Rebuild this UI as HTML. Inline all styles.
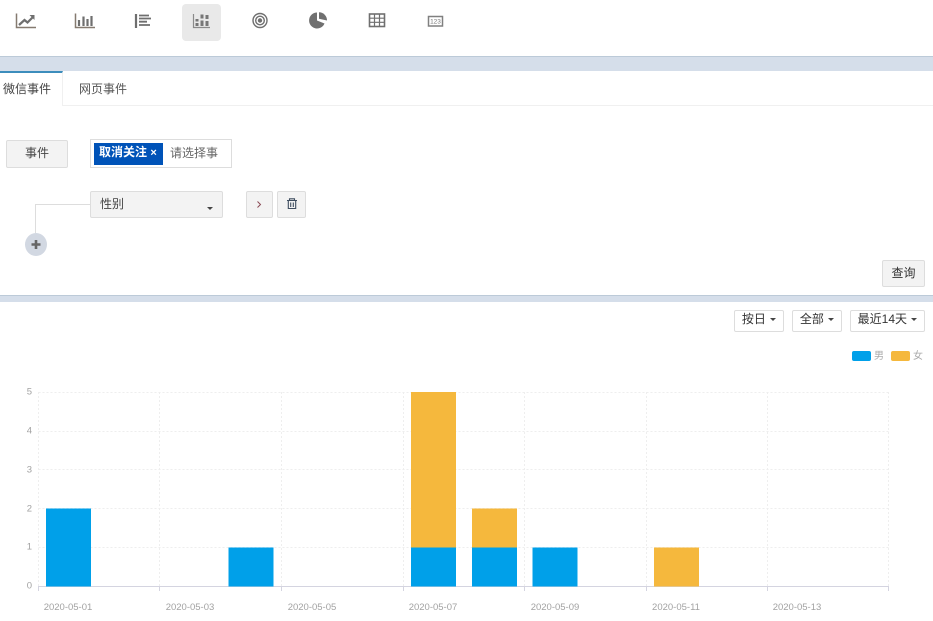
<!DOCTYPE html>
<html><head><meta charset="utf-8">
<style>
html,body{margin:0;padding:0;background:#fff}
body{width:933px;height:621px;position:relative;overflow:hidden;font-family:"Liberation Sans","Noto Sans CJK SC",sans-serif;font-size:12px;color:#333}
.a{position:absolute;box-sizing:border-box}
.band{left:0;width:933px;background:#d5deea;border-top:1px solid #bccad8}
.btn{background:#f3f3f3;border:1px solid #ddd;border-radius:2px;text-align:center;color:#444}
.drop{background:#fff;border:1px solid #ddd;border-radius:2px;text-align:center;color:#333;font-size:12px;height:22px;line-height:16px;top:310px}
.car{display:inline-block;width:0;height:0;border-left:3px solid transparent;border-right:3px solid transparent;border-top:3px solid #444;vertical-align:middle;margin-left:1px}
svg{position:absolute}
</style></head><body>
<svg style="left:0;top:0" width="480" height="50" viewBox="0 0 480 50" fill="none" stroke="#6f6f6f">
<rect x="182" y="4" width="39" height="37" rx="4" fill="#e9e9e9" stroke="none"/>
<path d="M16.500 13.500v14H36" stroke="#857a70" stroke-width="1.500"/>
<path d="M19 25l5.500-5 3 2.500 6-6" stroke-width="2.200"/><path d="M29.500 15h5v5z" fill="#6f6f6f" stroke="none"/>
<path d="M75.500 13.500v14H95" stroke="#857a70" stroke-width="1.500"/>
<path d="M79 26v-6M83.500 26v-9.500M87.500 26v-7M91.500 26v-10" stroke-width="2.200"/>
<path d="M136 14v14" stroke-width="2.200"/><path d="M139 15.500h10M139 18.500h12M139 21.700h8M139 25h11" stroke-width="1.800"/>
<path d="M193.500 14v13.500H210" stroke="#8a8a8a" stroke-width="1.200"/>
<path d="M197 19v2.500M197 23v3M202 14.500v4M202 20.500v5.500M207 15v4M207 21v5" stroke="#777" stroke-width="3"/>
<circle cx="260" cy="20.500" r="7" stroke-width="1.400"/><circle cx="260" cy="20.500" r="4.300" stroke-width="1.400"/><circle cx="260" cy="20.500" r="2.200" fill="#6f6f6f" stroke="none"/>
<path d="M317 12.500a8 8 0 1 0 7.500 11l-7.500-3z" fill="#707070" stroke="none"/><path d="M319 12.300a8 8 0 0 1 8 8.200l-8-1.800z" fill="#707070" stroke="none"/>
<rect x="369.500" y="14" width="15" height="12.500" stroke-width="1.600"/><path d="M369.500 18.200h15M369.500 22.300h15M374.500 14v12.500M379.500 14v12.500" stroke-width="1.200"/>
<rect x="428.500" y="16.500" width="14" height="9.500" stroke="#808080" stroke-width="1.500"/>
<text x="435.500" y="23.500" text-anchor="middle" font-size="6.500" fill="#777" stroke="none" font-family="Liberation Sans">123</text>
</svg>

<div class="a band" style="top:56px;height:15px"></div>
<div class="a" style="left:0;top:105px;width:933px;height:1px;background:#f0f0f0"></div>
<div class="a" style="left:0;top:71px;width:63px;height:35px;background:#fff;border-top:2px solid #3c8dbc;border-right:1px solid #f0f0f0;font-size:12px;line-height:33px;padding-left:3px;color:#444">微信事件</div>
<div class="a" style="left:79px;top:73px;line-height:33px;color:#555">网页事件</div>

<div class="a btn" style="left:6px;top:140px;width:62px;height:28px;line-height:24px">事件</div>
<div class="a" style="left:90px;top:139px;width:142px;height:29px;border:1px solid #ddd;background:#fff"></div>
<div class="a" style="left:94px;top:143px;width:69px;height:22px;background:#0053b8;color:#fff;font-weight:bold;line-height:19px;padding-left:5px;white-space:nowrap">取消关注 <span style="font-size:11px">×</span></div>
<div class="a" style="left:170px;top:144px;line-height:18px;color:#666">请选择事</div>

<div class="a" style="left:35px;top:204px;width:56px;height:29px;border-left:1px solid #ddd;border-top:1px solid #ddd"></div>
<div class="a btn" style="left:90px;top:191px;width:133px;height:27px;line-height:24px;text-align:left;padding-left:9px">性别<span class="car" style="position:absolute;left:116px;top:15px;margin:0"></span></div>
<div class="a btn" style="left:246px;top:191px;width:27px;height:27px"></div>
<svg style="left:246px;top:191px" width="60" height="27" fill="none"><path d="M11.500 10.500l3 3-3 3" stroke="#8a4a55" stroke-width="1"/></svg>
<div class="a btn" style="left:277px;top:191px;width:29px;height:27px"></div>
<svg style="left:277px;top:191px" width="29" height="27" fill="none" stroke="#3f4e60"><path d="M10 9.500h10M12.500 9V7.800h5V9" stroke-width="1.100"/><path d="M11.300 10v7.500h7.400V10M13.700 11.500v4.500M16.300 11.500v4.500" stroke-width="1.100"/></svg>
<div class="a" style="left:25px;top:233px;width:22px;height:23px;border-radius:50%;background:#d2d8e2"></div>
<svg style="left:25px;top:233px" width="22" height="23"><path d="M11 7v9M6.500 11.500h9" stroke="#666" stroke-width="2.600"/></svg>

<div class="a btn" style="left:882px;top:260px;width:43px;height:27px;line-height:25px;color:#333">查询</div>
<div class="a band" style="top:295px;height:7px"></div>

<div class="a drop" style="left:734px;width:50px">按日 <span class="car"></span></div>
<div class="a drop" style="left:792px;width:50px">全部 <span class="car"></span></div>
<div class="a drop" style="left:850px;width:75px">最近14天 <span class="car"></span></div>

<div class="a" style="left:852px;top:351px;width:19px;height:10px;border-radius:2px;background:#00a0e9"></div>
<div class="a" style="left:874px;top:350px;font-size:10px;line-height:14px;color:#aaa">男</div>
<div class="a" style="left:891px;top:351px;width:19px;height:10px;border-radius:2px;background:#f5b83d"></div>
<div class="a" style="left:913px;top:350px;font-size:10px;line-height:14px;color:#aaa">女</div>

<svg style="left:0;top:380px" width="933" height="241" viewBox="0 380 933 241" font-family="Liberation Sans" font-size="9.500" fill="#a2a2a2">
<g stroke="#eeeeee" stroke-width="1" stroke-dasharray="2 2" fill="none">
<path d="M38.500 392.500H889M38.500 431.500H889M38.500 469.500H889M38.500 508.500H889M38.500 547.500H889"/>
<path d="M38.500 392V586M159.500 392V586M281.500 392V586M403.500 392V586M524.500 392V586M646.500 392V586M767.500 392V586M888.500 392V586"/>
</g>
<g stroke="#d4d4e0" fill="none">
<path d="M38 586.500H889"/>
<path d="M38.500 586v5M159.500 586v5M281.500 586v5M403.500 586v5M524.500 586v5M646.500 586v5M767.500 586v5M888.500 586v5"/>
</g>
<g fill="#00a0e9">
<rect x="46" y="508.500" width="45" height="78"/>
<rect x="228.500" y="547.500" width="45" height="39"/>
<rect x="411" y="547.500" width="45" height="39"/>
<rect x="472" y="547.500" width="45" height="39"/>
<rect x="532.500" y="547.500" width="45" height="39"/>
</g>
<g fill="#f5b83d">
<rect x="411" y="392" width="45" height="155.500"/>
<rect x="472" y="508.500" width="45" height="39"/>
<rect x="654" y="547.500" width="45" height="39"/>
</g>
<g text-anchor="end">
<text x="32" y="394.500">5</text><text x="32" y="433.500">4</text><text x="32" y="472.500">3</text><text x="32" y="511.500">2</text><text x="32" y="549.500">1</text><text x="32" y="588.500">0</text>
</g>
<g text-anchor="middle">
<text x="68" y="610">2020-05-01</text><text x="190" y="610">2020-05-03</text><text x="312" y="610">2020-05-05</text><text x="433" y="610">2020-05-07</text><text x="555" y="610">2020-05-09</text><text x="676" y="610">2020-05-11</text><text x="797" y="610">2020-05-13</text>
</g>
</svg>
</body></html>
